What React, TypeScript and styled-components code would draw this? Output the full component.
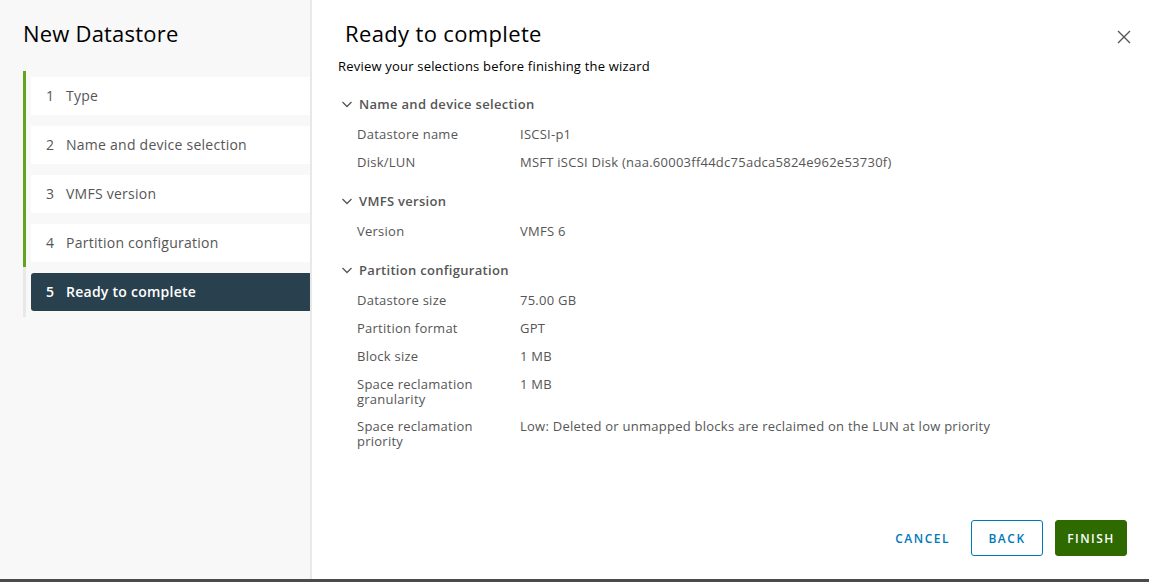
import React from "react";
import styled, { createGlobalStyle } from "styled-components";

const Global = createGlobalStyle`
  html, body { margin: 0; padding: 0; background: #ffffff; }
  body { font-family: "Open Sans", "Noto Sans", sans-serif; color: #565656; }
  * { box-sizing: border-box; }
`;

const Screen = styled.div`
  width: 1149px;
  height: 582px;
  display: flex;
  flex-direction: column;
  overflow: hidden;
`;

const Dialog = styled.div`
  flex: 1;
  display: flex;
  min-height: 0;
`;

const BottomStrip = styled.div`
  height: 3px;
  background: #4b4b4b;
`;

const Sidebar = styled.aside`
  width: 312px;
  background: #f8f8f8;
  border-right: 2px solid #e8e8e8;
  padding: 19px 0 0 23px;
  display: flex;
  flex-direction: column;
`;

const WizardTitle = styled.h1`
  margin: 0;
  font-size: 22px;
  font-weight: 400;
  color: #000;
  line-height: 28px;
  letter-spacing: 0.2px;
`;

const StepList = styled.ol`
  list-style: none;
  margin: 24px 0 0;
  padding: 6px 0;
  display: flex;
  flex-direction: column;
  gap: 11px;
  position: relative;
  border-left: 3px solid #e8e8e8;
`;

const ProgressBar = styled.span`
  position: absolute;
  left: -3px;
  top: 0;
  width: 3px;
  height: 196px;
  background: #62a420;
`;

const Step = styled.li<{ $active?: boolean }>`
  margin-left: 5px;
  height: 38px;
  display: flex;
  align-items: center;
  padding-left: 15px;
  padding-bottom: 2px;
  font-size: 14px;
  letter-spacing: 0.25px;
  background: ${(p) => (p.$active ? "#29414e" : "#ffffff")};
  color: ${(p) => (p.$active ? "#ffffff" : "#565656")};
  font-weight: ${(p) => (p.$active ? 600 : 400)};
  border-radius: ${(p) => (p.$active ? "3px 0 0 3px" : "0")};
`;

const StepNum = styled.span`
  width: 20px;
`;

const Main = styled.main`
  flex: 1;
  display: flex;
  flex-direction: column;
  padding: 18px 22px 23px 26px;
`;

const HeaderRow = styled.div`
  display: flex;
  justify-content: space-between;
  align-items: flex-start;
`;

const PageTitle = styled.h2`
  margin: 0 0 0 7px;
  font-size: 22px;
  font-weight: 400;
  color: #000;
  line-height: 30px;
  letter-spacing: 0.35px;
`;

const CloseBtn = styled.button`
  border: none;
  background: none;
  padding: 0;
  margin: 12px -4px 0 0;
  width: 14px;
  height: 14px;
  display: flex;
  cursor: pointer;
`;

const Subtitle = styled.p`
  margin: 9px 0 0;
  font-size: 13px;
  color: #000;
  line-height: 18px;
  letter-spacing: 0.2px;
`;

const Section = styled.section`
  margin-top: 20px;
  & + & { margin-top: 21px; }
`;

const SectionHeader = styled.div`
  display: flex;
  align-items: center;
  gap: 6px;
  font-size: 13px;
  font-weight: 600;
  color: #565656;
  height: 18px;
  margin-left: 3px;
  letter-spacing: 0.3px;
`;

const Rows = styled.div`
  display: flex;
  flex-direction: column;
  gap: 10px;
  margin-top: 12px;
  padding-left: 19px;
`;

const Row = styled.div`
  display: flex;
  font-size: 13px;
  line-height: 15px;
  color: #565656;
  min-height: 18px;
  padding-top: 2px;
  letter-spacing: 0.25px;
`;

const Label = styled.span`
  width: 163px;
  flex-shrink: 0;
  padding-right: 30px;
`;

const Value = styled.span`
  flex: 1;
`;

const Footer = styled.div`
  margin-top: auto;
  display: flex;
  justify-content: flex-end;
  align-items: center;
  gap: 12px;
`;

const Button = styled.button<{ $variant: "flat" | "outline" | "primary" }>`
  height: 36px;
  padding: 0 ${(p) => (p.$variant === "flat" ? "8px" : "11px")};
  font-family: inherit;
  font-size: 12px;
  font-weight: 600;
  letter-spacing: 1.5px;
  border-radius: 3px;
  cursor: pointer;
  border: 1px solid
    ${(p) =>
      p.$variant === "outline" ? "#0079b8" : p.$variant === "primary" ? "#2f6a00" : "transparent"};
  background: ${(p) => (p.$variant === "primary" ? "#2f6a00" : "transparent")};
  color: ${(p) => (p.$variant === "primary" ? "#ffffff" : "#0079b8")};
  min-width: ${(p) => (p.$variant === "flat" ? "0" : "72px")};
`;

const Chevron = () => (
  <svg width="12" height="12" viewBox="0 0 12 12" fill="none">
    <path d="M1.5 4 L6 8.5 L10.5 4" stroke="#565656" strokeWidth="1.3" />
  </svg>
);

const CloseIcon = () => (
  <svg width="14" height="14" viewBox="0 0 14 14" fill="none">
    <path d="M1 1 L13 13 M13 1 L1 13" stroke="#565656" strokeWidth="1.4" />
  </svg>
);

const steps = [
  "Type",
  "Name and device selection",
  "VMFS version",
  "Partition configuration",
  "Ready to complete",
];

const sections: { title: string; rows: [string, string][] }[] = [
  {
    title: "Name and device selection",
    rows: [
      ["Datastore name", "ISCSI-p1"],
      ["Disk/LUN", "MSFT iSCSI Disk (naa.60003ff44dc75adca5824e962e53730f)"],
    ],
  },
  { title: "VMFS version", rows: [["Version", "VMFS 6"]] },
  {
    title: "Partition configuration",
    rows: [
      ["Datastore size", "75.00 GB"],
      ["Partition format", "GPT"],
      ["Block size", "1 MB"],
      ["Space reclamation granularity", "1 MB"],
      [
        "Space reclamation priority",
        "Low: Deleted or unmapped blocks are reclaimed on the LUN at low priority",
      ],
    ],
  },
];

export default function App() {
  return (
    <>
      <Global />
      <Screen>
        <Dialog>
          <Sidebar>
            <WizardTitle>New Datastore</WizardTitle>
            <StepList>
              <ProgressBar />
              {steps.map((s, i) => (
                <Step key={s} $active={i === 4}>
                  <StepNum>{i + 1}</StepNum>
                  {s}
                </Step>
              ))}
            </StepList>
          </Sidebar>
          <Main>
            <HeaderRow>
              <PageTitle>Ready to complete</PageTitle>
              <CloseBtn aria-label="Close">
                <CloseIcon />
              </CloseBtn>
            </HeaderRow>
            <Subtitle>Review your selections before finishing the wizard</Subtitle>
            {sections.map((sec) => (
              <Section key={sec.title}>
                <SectionHeader>
                  <Chevron />
                  {sec.title}
                </SectionHeader>
                <Rows>
                  {sec.rows.map(([k, v]) => (
                    <Row key={k}>
                      <Label>{k}</Label>
                      <Value>{v}</Value>
                    </Row>
                  ))}
                </Rows>
              </Section>
            ))}
            <Footer>
              <Button $variant="flat">CANCEL</Button>
              <Button $variant="outline">BACK</Button>
              <Button $variant="primary">FINISH</Button>
            </Footer>
          </Main>
        </Dialog>
        <BottomStrip />
      </Screen>
    </>
  );
}
